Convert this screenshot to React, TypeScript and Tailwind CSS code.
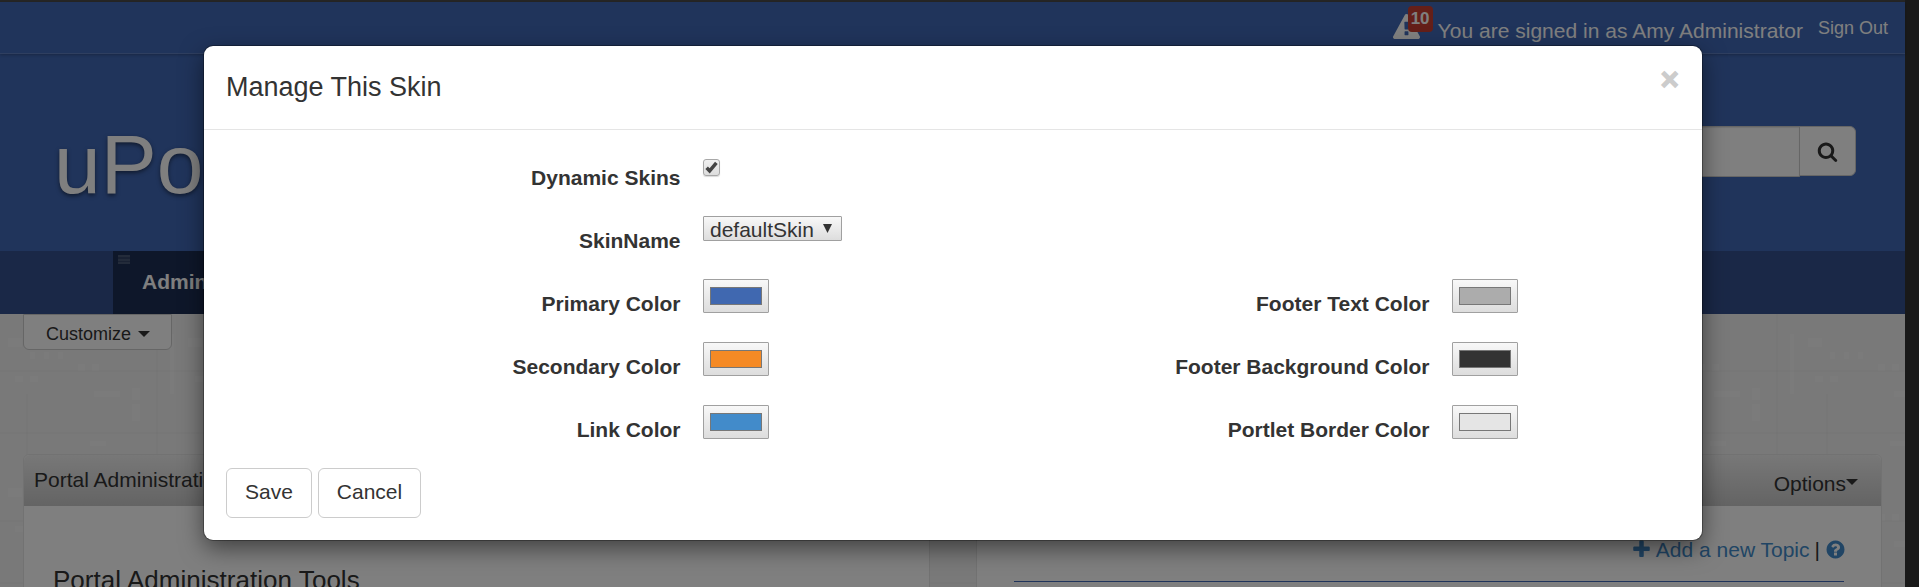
import type { ReactNode } from "react";

const PLUS =
  "M1600 736v192q0 40-28 68t-68 28h-416v416q0 40-28 68t-68 28h-192q-40 0-68-28t-28-68v-416h-416q-40 0-68-28t-28-68v-192q0-40 28-68t68-28h416v-416q0-40 28-68t68-28h192q40 0 68 28t28 68v416h416q40 0 68 28t28 68z";
const SEARCH =
  "M1216 832q0-185-131.5-316.5t-316.5-131.5-316.5 131.5-131.5 316.5 131.5 316.5 316.5 131.5 316.5-131.5 131.5-316.5zm512 832q0 52-38 90t-90 38q-54 0-90-38l-343-342q-179 124-399 124-143 0-273.5-55.5t-225-150-150-225-55.5-273.5 55.5-273.5 150-225 225-150 273.5-55.5 273.5 55.5 225 150 150 225 55.5 273.5q0 220-124 399l343 343q37 37 37 90z";
const QUESTION =
  "M1024 1376v-192q0-14-9-23t-23-9h-192q-14 0-23 9t-9 23v192q0 14 9 23t23 9h192q14 0 23-9t9-23zm256-672q0-88-55.5-163t-138.5-116-170-41q-243 0-371 213-15 24 8 42l132 100q7 6 19 6 16 0 25-12 53-68 86-92 34-24 86-24 48 0 85.5 26t37.5 59q0 38-20 61t-68 45q-63 28-115.5 86.5t-52.5 125.5v36q0 14 9 23t23 9h192q14 0 23-9t9-23q0-19 21.5-49.5t54.5-49.5q32-18 49-28.5t46-35 44.5-48 28-60.5 12.5-81zm384 192q0 209-103 385.5t-279.5 279.5-385.5 103-385.5-103-279.5-279.5-103-385.5 103-385.5 279.5-279.5 385.5-103 385.5 103 279.5 279.5 103 385.5z";
const WARNING =
  "M1024 1375v-190q0-14-9.5-23.5t-22.5-9.5h-192q-13 0-22.5 9.5t-9.5 23.5v190q0 14 9.5 23.5t22.5 9.5h192q13 0 22.5-9.5t9.5-23.5zm-2-374l18-459q0-12-10-19-13-11-24-11h-220q-11 0-24 11-10 7-10 21l17 457q0 10 10 16.5t24 6.5h185q14 0 23.5-6.5t10.5-16.5zm-14-934l768 1408q35 63-2 126-17 29-46.5 46t-63.5 17h-1536q-34 0-63.5-17t-46.5-46q-37-63-2-126l768-1408q17-31 47-49t65-18 65 18 47 49z";

function Icon({ d, className }: { d: string; className: string }) {
  return (
    <svg viewBox="0 0 1792 1792" fill="currentColor" className={className}>
      <path d={d} />
    </svg>
  );
}

function Caret({ className }: { className: string }) {
  return <span className={`inline-block border-x-6 border-t-6 border-x-transparent border-t-[#333] ${className}`} />;
}

function Texture() {
  return (
    <svg className="absolute inset-0 h-full w-full" aria-hidden="true">
      <defs>
        <pattern id="weave" width="180" height="150" patternUnits="userSpaceOnUse">
          <g fill="#fff" fillOpacity="0.25">
            <rect x="8" y="24" width="14" height="9" />
            <rect x="30" y="38" width="5" height="7" />
            <rect x="44" y="38" width="5" height="7" />
            <rect x="58" y="38" width="5" height="7" />
            <rect x="78" y="50" width="7" height="7" />
            <rect x="92" y="50" width="7" height="7" />
            <rect x="94" y="77" width="26" height="6" />
            <rect x="132" y="74" width="8" height="12" />
            <rect x="132" y="90" width="8" height="17" />
            <rect x="15" y="62" width="8" height="6" />
            <rect x="30" y="62" width="8" height="6" />
            <rect x="170" y="20" width="4" height="60" />
            <rect x="90" y="127" width="16" height="5" />
          </g>
          <g fill="#000" fillOpacity="0.014">
            <rect x="0" y="56" width="180" height="2" />
            <rect x="0" y="118" width="180" height="2" />
            <rect x="26" y="80" width="2" height="70" />
            <rect x="156" y="0" width="2" height="150" />
          </g>
        </pattern>
      </defs>
      <rect width="100%" height="100%" fill="url(#weave)" />
    </svg>
  );
}

function Swatch({ color }: { color: string }) {
  return (
    <span className="flex h-[34px] w-[66px] items-start rounded-[1px] border border-[#a0a0a0] bg-linear-to-b from-[#f8f8f8] to-[#dddddd] px-[6px] pt-[7px]">
      <span className="h-[18px] w-full border border-[#777]" style={{ backgroundColor: color }} />
    </span>
  );
}

function Field({ label, children }: { label: string; children: ReactNode }) {
  return (
    <div className="flex h-[63px]">
      <div className="w-[476.5px] pt-[10px] text-right font-bold">{label}</div>
      <div className="pl-[22.5px]">{children}</div>
    </div>
  );
}

function Page() {
  return (
    <div className="flex h-[587px] w-[1919px] overflow-hidden bg-[#333]">
      <div className="flex w-[1905px] flex-col bg-[#f3f3f3]">
        <div className="h-[2px] shrink-0 bg-[#4c4c4c]" />
        <header className="flex h-[249px] shrink-0 flex-col bg-[#4068b6]">
          <div className="flex h-[52px] shrink-0 justify-end border-b border-[#5f7fc0] pr-[17px] text-[#fff] shadow-[0_1px_3px_rgba(0,0,0,.25)]">
            <span className="relative mt-[12px] mr-[17px] h-[30px] w-[28px]">
              <Icon d={WARNING} className="h-[27px] w-[27px]" />
              <span className="absolute -top-[8px] left-[15px] flex h-[26px] w-[25px] items-center justify-center rounded-[4px] bg-[#c93f33] text-[17px] font-bold">
                10
              </span>
            </span>
            <span className="mt-[14px] text-[21px] leading-[30px] tracking-[0.02px]">You are signed in as Amy Administrator</span>
            <span className="mt-[13px] ml-[15px] text-[18px] leading-[27px]">Sign Out</span>
          </div>
          <div className="flex grow justify-between pr-[49px] pl-[54px]">
            <span className="mt-[56px] text-[84px] leading-[108px] text-[#fff] [text-shadow:0_2px_4px_rgba(0,0,0,.5)]">
              uPortal
            </span>
            <div className="mt-[72px] flex h-[52px] items-start">
              <span className="h-[51px] w-[300px] rounded-l-[6px] border border-[#ccc] bg-white shadow-[inset_0_1px_1px_rgba(0,0,0,.1)]" />
              <span className="-ml-px flex h-[50px] w-[57px] items-center justify-center rounded-r-[6px] border border-[#ccc] bg-white text-[#333]">
                <Icon d={SEARCH} className="h-[21px] w-[21px]" />
              </span>
            </div>
          </div>
        </header>
        <nav className="flex h-[63px] shrink-0 bg-[#34508e] pl-[113px]">
          <div className="flex h-full w-[220px] gap-[12px] bg-[#1c2e54] pt-[4px] pl-[5px] text-white">
            <span className="flex h-[9px] w-[12px] flex-col justify-between bg-white/10">
              <span className="h-[2px] bg-white/10" />
              <span className="h-[2px] bg-white/10" />
              <span className="h-[2px] bg-white/10" />
            </span>
            <span className="pt-[12px] text-[21px] leading-[30px] font-bold">Admin</span>
          </div>
        </nav>
        <main className="relative grow">
          <Texture />
          <div className="relative px-[23px]">
            <div className="flex h-[36px] w-[149px] items-center rounded-b-[6px] border border-[#ccc] bg-white pt-[4px] pl-[22px] text-[18px]">
              Customize
              <Caret className="ml-[7px]" />
            </div>
            <div className="mt-[104px] flex gap-[46px]">
              <section className="h-[200px] w-[907px] rounded-t-[6px] border border-[#e5e5e5] bg-white">
                <div className="h-[51px] rounded-t-[6px] bg-linear-to-b from-[#f0f0f0] to-[#c8c8c8] pt-[10px] pl-[10px] text-[21px] leading-[30px]">
                  Portal Administration
                </div>
                <h2 className="pt-[57px] pl-[29px] text-[26px] leading-[34px] tracking-[0.03px]">Portal Administration Tools</h2>
              </section>
              <section className="h-[200px] w-[907px] rounded-t-[6px] border border-[#e5e5e5] bg-white">
                <div className="flex h-[51px] justify-end rounded-t-[6px] bg-linear-to-b from-[#f0f0f0] to-[#c8c8c8] pt-[14px] pr-[23px] text-[21px] leading-[30px]">
                  Options
                  <Caret className="mt-[10px]" />
                </div>
                <div className="mr-[37px] ml-[37px] flex h-[76px] items-start justify-end border-b border-[#4068b6] pt-[29px] text-[21px] leading-[30px] text-[#428bca]">
                  <Icon d={PLUS} className="mt-[4px] mr-[4px] h-[21px] w-[21px]" />
                  Add a new Topic
                  <span className="mx-[5px] text-[#333]">|</span>
                  <Icon d={QUESTION} className="mt-[4px] -mr-[2px] h-[21px] w-[21px]" />
                </div>
              </section>
            </div>
          </div>
        </main>
      </div>
    </div>
  );
}

function SkinDialog() {
  return (
    <div className="flex h-[494px] w-[1498px] flex-col rounded-[9px] bg-white shadow-[0_0_0_1px_rgba(0,0,0,.3),0_8px_23px_rgba(0,0,0,.5)]">
      <div className="flex h-[84px] justify-between border-b border-[#e5e5e5] pt-[22px] pr-[23px] pl-[22px]">
        <h1 className="text-[27px] leading-[38px]">Manage This Skin</h1>
        <span className="-mt-[5px] text-[31.5px] leading-[32px] font-bold text-[#ccc] [-webkit-text-stroke:1.2px_#ccc]">×</span>
      </div>
      <div className="pt-[23px] text-[21px] leading-[30px]">
        <Field label="Dynamic Skins">
          <span className="mt-[6px] flex h-[17px] w-[17px] items-center justify-center rounded-[3px] border border-[#a8a8a8] bg-linear-to-b from-[#f0f0f0] to-[#dddddd] shadow-[0_1px_1px_rgba(0,0,0,.15)]">
            <svg viewBox="0 0 12 12" className="h-[13px] w-[13px]">
              <path d="M1.5 6.2 L4.3 9.2 L10.5 1.8" fill="none" stroke="#444" strokeWidth="3.2" />
            </svg>
          </span>
        </Field>
        <Field label="SkinName">
          <span className="flex h-[25px] w-[139px] items-center rounded-[1px] border border-[#a0a0a0] bg-linear-to-b from-[#f8f8f8] to-[#dddddd] pt-[3px] pl-[6px]">
            defaultSkin
            <svg viewBox="0 0 9 9" className="mb-[4px] ml-[9px] h-[9px] w-[9px]">
              <path d="M0 0H9L4.5 9Z" fill="#333" />
            </svg>
          </span>
        </Field>
        <div className="flex">
          <div className="w-[749px]">
            <Field label="Primary Color"><Swatch color="#4068b0" /></Field>
            <Field label="Secondary Color"><Swatch color="#f58a25" /></Field>
            <Field label="Link Color"><Swatch color="#428bca" /></Field>
          </div>
          <div>
            <Field label="Footer Text Color"><Swatch color="#acacac" /></Field>
            <Field label="Footer Background Color"><Swatch color="#333333" /></Field>
            <Field label="Portlet Border Color"><Swatch color="#e5e5e5" /></Field>
          </div>
        </div>
        <div className="flex gap-[6px] pl-[22px]">
          <button className="h-[50px] w-[86px] rounded-[6px] border border-[#ccc] bg-white pb-[2px]">Save</button>
          <button className="h-[50px] w-[103px] rounded-[6px] border border-[#ccc] bg-white pb-[2px]">Cancel</button>
        </div>
      </div>
    </div>
  );
}

export default function App() {
  return (
    <div className="relative h-[587px] w-[1919px] overflow-hidden font-['Liberation_Sans',Arial,sans-serif] text-[#333]">
      <Page />
      <div className="absolute inset-0 bg-black/50 pt-[46px] pl-[204px]">
        <SkinDialog />
      </div>
    </div>
  );
}
